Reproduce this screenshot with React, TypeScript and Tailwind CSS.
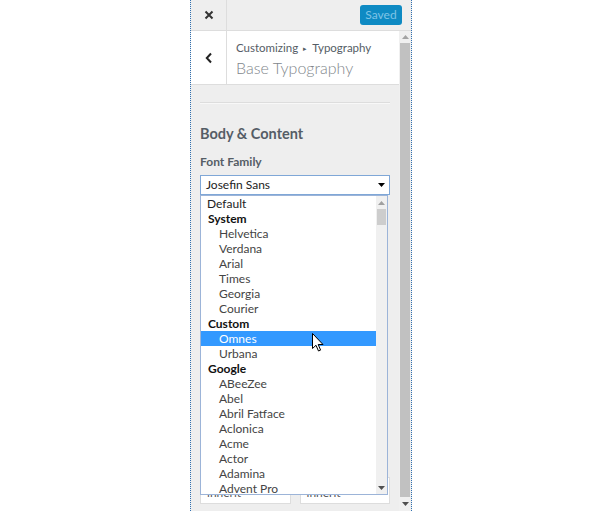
import React from "react";

const items: { label: string; kind: "plain" | "group" | "opt"; selected?: boolean }[] = [
  { label: "Default", kind: "plain" },
  { label: "System", kind: "group" },
  { label: "Helvetica", kind: "opt" },
  { label: "Verdana", kind: "opt" },
  { label: "Arial", kind: "opt" },
  { label: "Times", kind: "opt" },
  { label: "Georgia", kind: "opt" },
  { label: "Courier", kind: "opt" },
  { label: "Custom", kind: "group" },
  { label: "Omnes", kind: "opt", selected: true },
  { label: "Urbana", kind: "opt" },
  { label: "Google", kind: "group" },
  { label: "ABeeZee", kind: "opt" },
  { label: "Abel", kind: "opt" },
  { label: "Abril Fatface", kind: "opt" },
  { label: "Aclonica", kind: "opt" },
  { label: "Acme", kind: "opt" },
  { label: "Actor", kind: "opt" },
  { label: "Adamina", kind: "opt" },
  { label: "Advent Pro", kind: "opt" },
];

function Tri({ up, color = "#000" }: { up?: boolean; color?: string }) {
  return (
    <svg width="7" height="4" viewBox="0 0 7 4">
      {up ? <polygon points="0,4 7,4 3.5,0" fill={color} /> : <polygon points="0,0 7,0 3.5,4" fill={color} />}
    </svg>
  );
}

export default function App() {
  const font = { fontFamily: 'Lato, "Noto Sans", sans-serif' };
  return (
    <div className="w-[601px] h-[511px] bg-white overflow-hidden" style={font}>
      <div className="ml-[190px] w-[222px] h-[511px] border-x border-dotted border-[#2f6fb0] flex flex-col bg-[#eeeeee]">
        {/* top bar */}
        <div className="h-[31px] shrink-0 flex items-stretch border-b border-[#dddddd] bg-[#eeeeee]">
          <div className="w-[36px] border-r border-[#dddddd] flex items-center justify-center">
            <svg width="10" height="10" viewBox="0 0 10 10">
              <path d="M1.5 1.5 L8.5 8.5 M8.5 1.5 L1.5 8.5" stroke="#333" strokeWidth="2" />
            </svg>
          </div>
          <div className="flex-1" />
          <div className="flex items-center pr-[9px]">
            <div className="h-[20px] w-[42px] rounded-[3px] bg-[#0e8ac3] text-[#7fc4e6] text-[12px] flex items-center justify-center mt-[-1px]">
              Saved
            </div>
          </div>
        </div>
        {/* body */}
        <div className="flex-1 flex min-h-0">
          <div className="flex-1 flex flex-col relative min-w-0">
            {/* header */}
            <div className="h-[54px] shrink-0 bg-white flex border-b border-[#dddddd]">
              <div className="w-[36px] border-r border-[#dddddd] flex items-center justify-center">
                <svg width="8" height="12" viewBox="0 0 8 12">
                  <path d="M6 1.5 L1.8 6 L6 10.5" stroke="#222" strokeWidth="2" fill="none" />
                </svg>
              </div>
              <div className="pl-[9px] pt-[10px] flex flex-col">
                <div className="text-[11.5px] leading-[14px] text-[#555d66] flex items-center gap-[5px]">
                  <span>Customizing</span>
                  <span className="text-[7px]">▸</span>
                  <span>Typography</span>
                </div>
                <div className="text-[16px] leading-[20px] text-[#82878c] font-light mt-[3px]">Base Typography</div>
              </div>
            </div>
            {/* content */}
            <div className="px-[9px] flex flex-col">
              <div className="mt-[17px] border-t border-[#dddddd] border-b border-b-[#f8f8f8]" />
              <div className="mt-[21px] text-[14.5px] leading-[18px] font-bold text-[#555d66]">Body &amp; Content</div>
              <div className="mt-[11px] text-[12px] leading-[16px] font-bold text-[#555d66]">Font Family</div>
              <div className="mt-[5px] h-[20px] bg-white border border-[#7fa7d7] flex items-center justify-between pl-[5px] pr-[4px]">
                <span className="text-[12px] text-[#222]">Josefin Sans</span>
                <Tri />
              </div>
              <div className="h-[282px]" />
              <div className="flex gap-[9px]">
                <div className="w-[91px] h-[27px] bg-white border border-[#dddddd] flex items-end pl-[6px] pb-[1px]">
                  <span className="text-[12px] text-[#555]">inherit</span>
                </div>
                <div className="w-[91px] h-[27px] bg-white border border-[#dddddd] flex items-end pl-[6px] pb-[1px]">
                  <span className="text-[12px] text-[#555]">inherit</span>
                </div>
              </div>
            </div>
            {/* dropdown list overlay */}
            <div className="absolute left-[9px] top-[164px] w-[188px] h-[300px] bg-white border border-[#9cb4d8] flex">
              <div className="flex-1 flex flex-col">
                {items.map((it) => (
                  <div
                    key={it.label}
                    className={
                      "h-[15px] leading-[15px] text-[12px] whitespace-nowrap " +
                      (it.selected ? "bg-[#3399ff] text-white " : "") +
                      (it.kind === "plain"
                        ? "pl-[6px] text-[#222]"
                        : it.kind === "group"
                        ? "pl-[7px] font-bold text-[#111]"
                        : "pl-[18px] " + (it.selected ? "" : "text-[#444]"))
                    }
                  >
                    {it.label}
                  </div>
                ))}
              </div>
              <div className="w-[11px] bg-[#f0f0f0] flex flex-col items-center">
                <div className="h-[13px] flex items-center justify-center">
                  <Tri up color="#a0a0a0" />
                </div>
                <div className="w-[9px] h-[16px] bg-[#cdcdcd]" />
                <div className="flex-1" />
                <div className="h-[13px] flex items-center justify-center">
                  <Tri color="#505050" />
                </div>
              </div>
              {/* cursor */}
              <svg className="absolute left-[111px] top-[137px]" width="12" height="19" viewBox="0 0 12 19">
                <path d="M0.5 0.5 L0.5 15.5 L4 12.3 L6.5 18 L8.6 17.1 L6.2 11.5 L11 11.5 Z" fill="#fff" stroke="#000" strokeWidth="1" strokeLinejoin="round" />
              </svg>
            </div>
          </div>
          {/* page scrollbar */}
          <div className="w-[12px] shrink-0 bg-[#f0f0f0] flex flex-col items-center">
            <div className="h-[12px] flex items-center justify-center">
              <Tri up color="#a3a3a3" />
            </div>
            <div className="w-[10px] flex-1 bg-[#c1c1c1]" />
            <div className="h-[14px] flex items-center justify-center">
              <Tri color="#505050" />
            </div>
          </div>
        </div>
      </div>
    </div>
  );
}
